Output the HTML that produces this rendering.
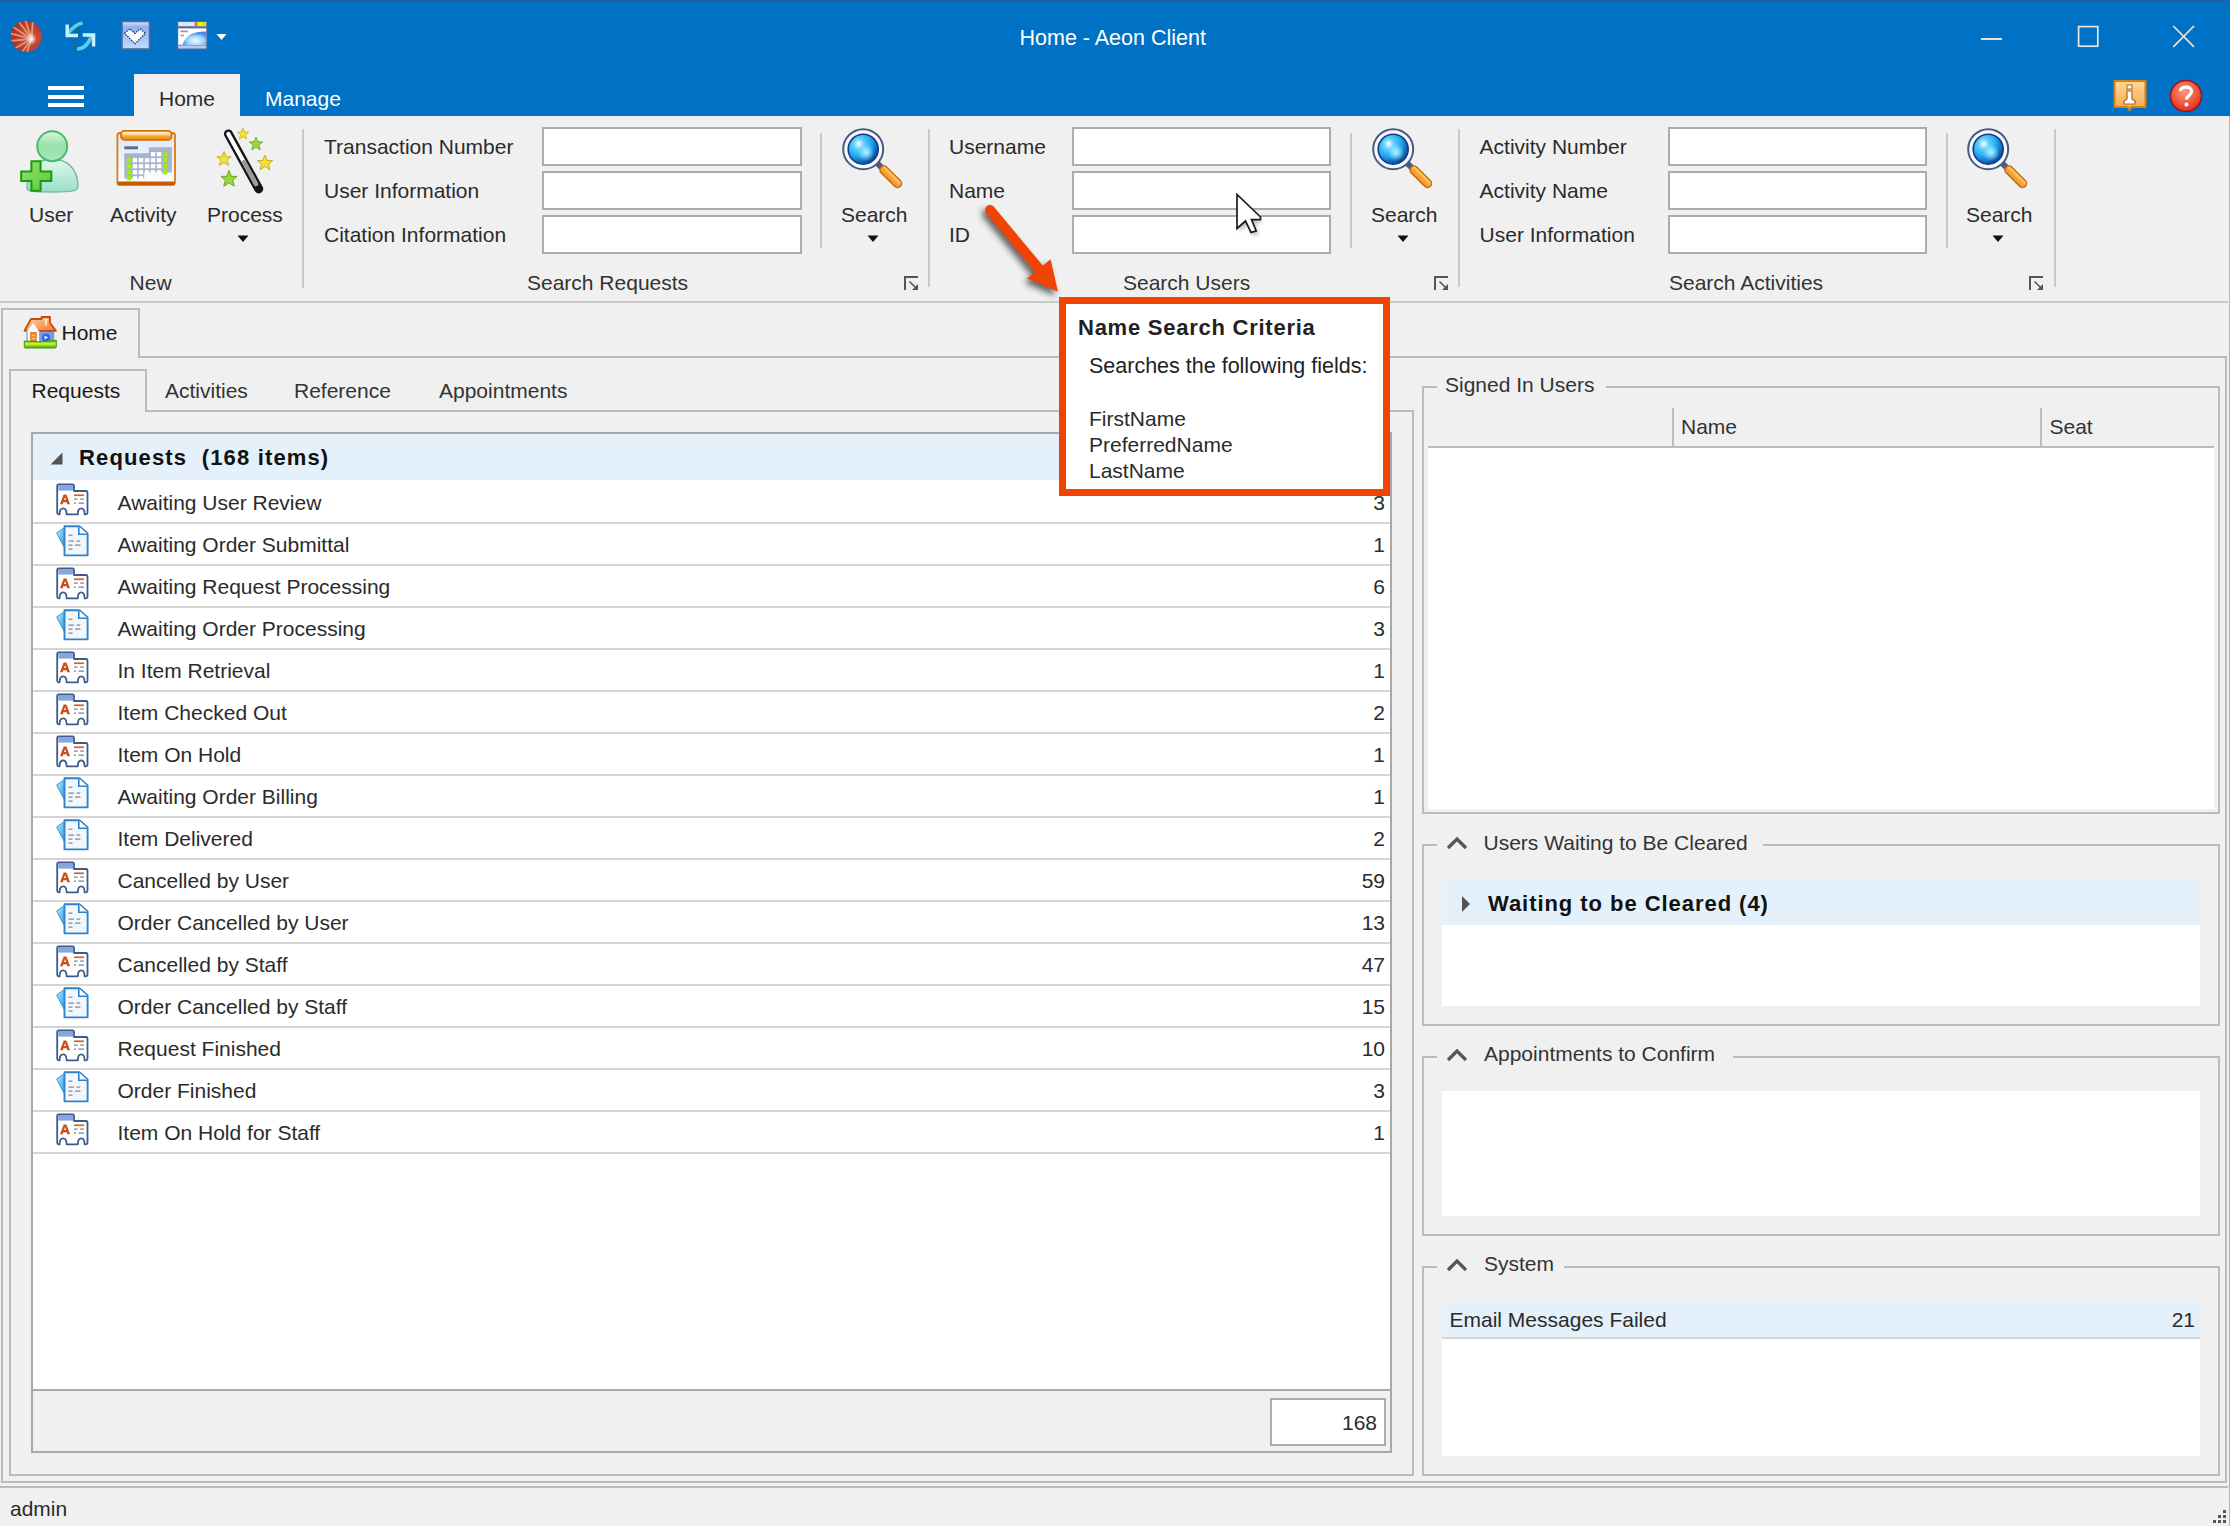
<!DOCTYPE html>
<html><head><meta charset="utf-8"><title>Home - Aeon Client</title>
<style>
html,body{margin:0;padding:0;}
body{width:2230px;height:1526px;position:relative;overflow:hidden;background:#f0f0f0;font-family:"Liberation Sans",sans-serif;}
body>div,body>svg{position:absolute;box-sizing:content-box;}
.t{white-space:nowrap;}
</style></head><body>
<div style="left:0px;top:0px;width:2230px;height:116px;background:#0072c6;"></div>
<div style="left:0px;top:0px;width:2230px;height:1px;background:#1e5e9e;"></div>
<svg style="left:9px;top:19px" width="35" height="35" viewBox="0 0 35 35"><defs><radialGradient id="rg1" cx="65%" cy="55%" r="70%"><stop offset="0" stop-color="#d05a40"/><stop offset="1" stop-color="#aa2c14"/></radialGradient>
<radialGradient id="rg1b" cx="50%" cy="50%" r="50%"><stop offset="0" stop-color="#fff" stop-opacity="1"/><stop offset="1" stop-color="#fff" stop-opacity="0"/></radialGradient>
<clipPath id="cp1"><circle cx="17.3" cy="17.3" r="15.6"/></clipPath></defs>
<circle cx="17.3" cy="17.3" r="15.6" fill="url(#rg1)"/>
<g clip-path="url(#cp1)" stroke="#f0b0a0" stroke-width="1.8" opacity=".75" stroke-linecap="round">
<line x1="22.5" y1="20" x2="1" y2="6"/><line x1="22.5" y1="20" x2="0" y2="14"/><line x1="22.5" y1="20" x2="0" y2="22"/><line x1="22.5" y1="20" x2="3" y2="31"/>
<line x1="22.5" y1="20" x2="11" y2="36"/><line x1="22.5" y1="20" x2="8" y2="0"/><line x1="22.5" y1="20" x2="16" y2="0"/><line x1="22.5" y1="20" x2="24" y2="1"/><line x1="22.5" y1="20" x2="17" y2="36"/></g>
<ellipse cx="22.5" cy="20" rx="5" ry="6" fill="url(#rg1b)"/></svg>
<svg style="left:63px;top:19px" width="35" height="33" viewBox="0 0 35 33"><g fill="none" stroke-linecap="butt">
<path d="M17.5 17 C14 14 14 6 19 4.5" stroke="#1c6a8a" stroke-width="3" opacity=".8"/>
<path d="M14 29.5 C19 31 25 26 28.5 17.5" stroke="#5ccdf0" stroke-width="3.6"/>
<path d="M14.5 18.5 C10 21 10 28 14 29.5" stroke="#1c6a8a" stroke-width="3" opacity=".8"/>
<path d="M4 15.5 C9 9 13 5 19.5 4" stroke="#5ccdf0" stroke-width="3.6"/>
<path d="M4.2 5.5 V16.5 H15" stroke="#c8f2ff" stroke-width="3.4"/>
<path d="M19.8 16 H30.6 V27.4" stroke="#c8f2ff" stroke-width="3.4"/></g></svg>
<svg style="left:120px;top:20px" width="32" height="32" viewBox="0 0 32 32"><defs><linearGradient id="bsq" x1="0" y1="0" x2="0" y2="1"><stop offset="0" stop-color="#dde8ff"/><stop offset=".2" stop-color="#8fb2f0"/><stop offset="1" stop-color="#c2dcff"/></linearGradient></defs>
<rect x="2" y="1.5" width="27.5" height="27.5" fill="url(#bsq)" stroke="#5a6890" stroke-width="1.6"/>
<path d="M4.5 13.2 L10 8.8 L15 13.5 L20 8.8 L25.5 13.2 L15 23.8 Z" fill="#fff" stroke="#2a3a80" stroke-width="1.4" stroke-dasharray="1.6 1"/></svg>
<svg style="left:176px;top:20px" width="33" height="31" viewBox="0 0 33 31"><defs><radialGradient id="glb" cx="55%" cy="70%" r="60%"><stop offset="0" stop-color="#f0fbff"/><stop offset=".55" stop-color="#a8d8ff"/><stop offset="1" stop-color="#3b8cf5"/></radialGradient></defs>
<rect x="1.2" y="1" width="30" height="28.5" fill="#5a6a9a"/>
<rect x="2.2" y="2" width="28" height="4.2" fill="#dfe8fa"/>
<rect x="18.5" y="2" width="3.2" height="4.2" fill="#f07060"/><rect x="22" y="2" width="3" height="4.2" fill="#f0f000"/><rect x="25.8" y="2" width="3.8" height="4.2" fill="#c8e800"/>
<rect x="2.2" y="8.4" width="28" height="16.3" fill="#fff"/>
<rect x="4.4" y="10.6" width="7.6" height="1.6" rx=".8" fill="#8a9ab8"/><rect x="4.4" y="14.7" width="3.8" height="1.6" rx=".8" fill="#8a9ab8"/>
<path d="M6.6 24.7 C9 16 17 11 30.2 11.5 V24.7 Z" fill="url(#glb)"/>
<rect x="2.2" y="25.4" width="28" height="3.1" fill="#b8c8f2"/></svg>
<svg style="left:216px;top:33px" width="11" height="8"><path d="M0.5 1 L10.5 1 L5.5 7 Z" fill="#fff"/></svg>
<div class="t" style="top:28.2px;font-size:21.5px;line-height:21.5px;color:#fff;left:1019.5px;">Home - Aeon Client</div>
<div style="left:1981px;top:38.2px;width:21px;height:1.7999999999999972px;background:#ece6da;"></div>
<svg style="left:2077px;top:25px" width="23" height="23" viewBox="0 0 23 23"><rect x="1.6" y="1.6" width="19.2" height="19.6" fill="none" stroke="#ece6da" stroke-width="1.7"/></svg>
<svg style="left:2172px;top:25px" width="23" height="23" viewBox="0 0 23 23"><g stroke="#ece6da" stroke-width="1.7"><line x1="1.3" y1="1" x2="22" y2="21.8"/><line x1="22" y1="1" x2="1.3" y2="21.8"/></g></svg>
<div style="left:48px;top:86px;width:36px;height:4px;background:#fff;"></div>
<div style="left:48px;top:95px;width:36px;height:4px;background:#fff;"></div>
<div style="left:48px;top:103px;width:36px;height:3.5px;background:#fff;"></div>
<div style="left:134px;top:74px;width:106px;height:42px;background:#f0f0f0;"></div>
<div class="t" style="top:88.2px;font-size:21px;line-height:21px;color:#2b2b2b;left:159.0px;">Home</div>
<div class="t" style="top:88.2px;font-size:21px;line-height:21px;color:#fff;left:265.0px;">Manage</div>
<svg style="left:2112px;top:78px" width="36" height="35" viewBox="0 0 36 35"><defs><linearGradient id="lg_i" x1="0" y1="0" x2="0" y2="1"><stop offset="0" stop-color="#ffd79a"/><stop offset="1" stop-color="#f5a84a"/></linearGradient></defs>
<path d="M2.5 3 H33.5 V29 H19.5 L17.5 32 L15.5 29 H2.5 Z" fill="url(#lg_i)" stroke="#d9800e" stroke-width="2"/>
<rect x="15" y="7" width="5" height="4" fill="#fff" stroke="#b0641a" stroke-width="1"/>
<path d="M15 13 H20 V21 L23 23 V26 H12 V23 L15 21 Z" fill="#fff" stroke="#b0641a" stroke-width="1.2"/></svg>
<svg style="left:2168px;top:78px" width="36" height="36" viewBox="0 0 36 36"><defs><radialGradient id="rg_h" cx="45%" cy="35%" r="65%"><stop offset="0" stop-color="#ff9a7a"/><stop offset="1" stop-color="#e0301c"/></radialGradient></defs>
<circle cx="18" cy="18" r="15.5" fill="url(#rg_h)" stroke="#a01010" stroke-width="1.5"/>
<path d="M12.5 13 C12.5 8 23.5 7.5 23.5 13.5 C23.5 17 18.5 17.5 18.5 21.5" fill="none" stroke="#fff" stroke-width="3.2"/>
<circle cx="18.5" cy="26.5" r="2" fill="#fff"/></svg>
<div style="left:2229px;top:116px;width:1px;height:1410px;background:#8fbde8;"></div>
<div style="left:0px;top:116px;width:2228px;height:185px;background:#f0f0f0;"></div>
<div style="left:0px;top:301px;width:2228px;height:2px;background:#c9c9c9;"></div>
<svg style="left:18px;top:126px" width="64" height="70" viewBox="0 0 64 70"><defs><linearGradient id="ug1" x1="0" y1="0" x2="0" y2="1"><stop offset="0" stop-color="#d8f7dc"/><stop offset=".5" stop-color="#95e0a8"/><stop offset="1" stop-color="#a8e8c0"/></linearGradient>
<linearGradient id="ug2" x1="0" y1="0" x2="0" y2="1"><stop offset="0" stop-color="#e2f8ea"/><stop offset="1" stop-color="#98e0c8"/></linearGradient>
<linearGradient id="ug3" x1="0" y1="0" x2="1" y2="1"><stop offset="0" stop-color="#9ae070"/><stop offset="1" stop-color="#5cc83a"/></linearGradient></defs>
<path d="M9 62 C9 44 18 33 34 33 C50 33 60 44 60 60 C60 65 55 66 34 66 C14 66 9 65 9 62 Z" fill="url(#ug2)" stroke="#78b8a0" stroke-width="1.4"/>
<circle cx="34.2" cy="20.2" r="15" fill="url(#ug1)" stroke="#4cb86a" stroke-width="2"/>
<path d="M13.4 35.3 H22.6 V45.6 H33.3 V55 H22.6 V64.7 H13.4 V55 H3.2 V45.6 H13.4 Z" fill="url(#ug3)" stroke="#1a9a0a" stroke-width="2"/></svg>
<div class="t" style="top:204.2px;font-size:21px;line-height:21px;color:#2b2b2b;left:29.0px;">User</div>
<svg style="left:114px;top:128px" width="64" height="60" viewBox="0 0 64 60"><defs><linearGradient id="cal1" x1="0" y1="0" x2="0" y2="1"><stop offset="0" stop-color="#dbe6fa"/><stop offset="1" stop-color="#fff"/></linearGradient>
<linearGradient id="cal2" x1="0" y1="0" x2="0" y2="1"><stop offset="0" stop-color="#fff"/><stop offset=".35" stop-color="#ffe0a0"/><stop offset=".6" stop-color="#f8a830"/><stop offset="1" stop-color="#e88a18"/></linearGradient></defs>
<rect x="3.4" y="5" width="57.6" height="51.5" rx="2.5" fill="url(#cal1)" stroke="#dd7a10" stroke-width="1.8"/>
<rect x="3.4" y="53.5" width="57.6" height="4" rx="1.5" fill="#c85a00"/>
<rect x="7" y="2.8" width="50.5" height="9" rx="3.5" fill="url(#cal2)" stroke="#d87008" stroke-width="1.8"/>
<rect x="10.3" y="18.3" width="13.7" height="3" fill="#5a6a90"/>
<path d="M34.8 19.2 H57.9 V44.4 H30.2 V50.4 H10.3 V25.2 H34.8 Z" fill="#a8b4cc"/>
<rect x="36.9" y="24.1" width="4.4" height="4.2" fill="#fff"/><rect x="42.9" y="24.1" width="4.4" height="4.2" fill="#fff"/><rect x="48.9" y="24.1" width="4.4" height="4.2" fill="#a0f000"/><rect x="12.8" y="30.1" width="4.4" height="4.2" fill="#a0f000"/><rect x="18.8" y="30.1" width="4.4" height="4.2" fill="#fff"/><rect x="24.8" y="30.1" width="4.4" height="4.2" fill="#fff"/><rect x="30.9" y="30.1" width="4.4" height="4.2" fill="#fff"/><rect x="36.9" y="30.1" width="4.4" height="4.2" fill="#fff"/><rect x="42.9" y="30.1" width="4.4" height="4.2" fill="#fff"/><rect x="48.9" y="30.1" width="4.4" height="4.2" fill="#a0f000"/><rect x="12.8" y="36.1" width="4.4" height="4.2" fill="#a0f000"/><rect x="18.8" y="36.1" width="4.4" height="4.2" fill="#fff"/><rect x="24.8" y="36.1" width="4.4" height="4.2" fill="#fff"/><rect x="30.9" y="36.1" width="4.4" height="4.2" fill="#fff"/><rect x="36.9" y="36.1" width="4.4" height="4.2" fill="#fff"/><rect x="42.9" y="36.1" width="4.4" height="4.2" fill="#fff"/><rect x="48.9" y="36.1" width="4.4" height="4.2" fill="#a0f000"/><rect x="12.8" y="42.2" width="4.4" height="4.2" fill="#a0f000"/><rect x="18.8" y="42.2" width="4.4" height="4.2" fill="#fff"/><rect x="24.8" y="42.2" width="4.4" height="4.2" fill="#fff"/><rect x="30.9" y="42.2" width="4.4" height="4.2" fill="#fff"/><rect x="36.9" y="42.2" width="4.4" height="4.2" fill="#fff"/><rect x="42.9" y="42.2" width="4.4" height="4.2" fill="#fff"/><rect x="48.9" y="42.2" width="4.4" height="4.2" fill="#a0f000"/><rect x="12.8" y="48.2" width="4.4" height="4.2" fill="#a0f000"/><rect x="18.8" y="48.2" width="4.4" height="4.2" fill="#fff"/><rect x="24.8" y="48.2" width="4.4" height="4.2" fill="#fff"/></svg>
<div class="t" style="top:204.2px;font-size:21px;line-height:21px;color:#2b2b2b;left:110.0px;">Activity</div>
<svg style="left:214px;top:126px" width="62" height="68" viewBox="0 0 62 68"><defs><linearGradient id="wg" x1="0" y1="0" x2="1" y2="0"><stop offset="0" stop-color="#222"/><stop offset=".5" stop-color="#fff"/><stop offset="1" stop-color="#111"/></linearGradient></defs>
<line x1="14.4" y1="7.9" x2="44.7" y2="62.9" stroke="#151515" stroke-width="9" stroke-linecap="round"/>
<line x1="14.4" y1="7.9" x2="42" y2="58" stroke="#fafafa" stroke-width="4.2" stroke-linecap="round"/>
<line x1="30" y1="36" x2="42" y2="58" stroke="#999" stroke-width="4.2" stroke-linecap="round"/>
<path transform="translate(29,8) scale(0.6)" d="M0 -10 L2.9 -3.1 L9.5 -3.1 L4.3 1.7 L6.2 8.5 L0 4.5 L-6.2 8.5 L-4.3 1.7 L-9.5 -3.1 L-2.9 -3.1 Z" fill="#f3e13a" stroke="#c0a000" stroke-width="1"/><path transform="translate(42,18) scale(0.7)" d="M0 -10 L2.9 -3.1 L9.5 -3.1 L4.3 1.7 L6.2 8.5 L0 4.5 L-6.2 8.5 L-4.3 1.7 L-9.5 -3.1 L-2.9 -3.1 Z" fill="#9ad83a" stroke="#5a9a10" stroke-width="1"/><path transform="translate(10,33) scale(0.75)" d="M0 -10 L2.9 -3.1 L9.5 -3.1 L4.3 1.7 L6.2 8.5 L0 4.5 L-6.2 8.5 L-4.3 1.7 L-9.5 -3.1 L-2.9 -3.1 Z" fill="#f3e13a" stroke="#c0a000" stroke-width="1"/><path transform="translate(51,37) scale(0.8)" d="M0 -10 L2.9 -3.1 L9.5 -3.1 L4.3 1.7 L6.2 8.5 L0 4.5 L-6.2 8.5 L-4.3 1.7 L-9.5 -3.1 L-2.9 -3.1 Z" fill="#f3e13a" stroke="#c0a000" stroke-width="1"/><path transform="translate(15,53) scale(0.85)" d="M0 -10 L2.9 -3.1 L9.5 -3.1 L4.3 1.7 L6.2 8.5 L0 4.5 L-6.2 8.5 L-4.3 1.7 L-9.5 -3.1 L-2.9 -3.1 Z" fill="#9ad83a" stroke="#5a9a10" stroke-width="1"/></svg>
<div class="t" style="top:204.2px;font-size:21px;line-height:21px;color:#2b2b2b;left:207.0px;">Process</div>
<svg style="left:237px;top:235px" width="12" height="8"><path d="M0.5 0.5 L11.5 0.5 L6 7 Z" fill="#111"/></svg>
<div class="t" style="top:272.1px;font-size:21px;line-height:21px;color:#333;left:129.6px;">New</div>
<div style="left:302px;top:129px;width:2px;height:159px;background:#c8c8c8;"></div>
<div class="t" style="top:136.2px;font-size:21px;line-height:21px;color:#2b2b2b;left:324.0px;">Transaction Number</div>
<div class="t" style="top:180.2px;font-size:21px;line-height:21px;color:#2b2b2b;left:324.0px;">User Information</div>
<div class="t" style="top:224.2px;font-size:21px;line-height:21px;color:#2b2b2b;left:324.0px;">Citation Information</div>
<div style="left:542px;top:126.5px;width:256px;height:35.5px;border:2px solid #acacac;background:#fff"></div>
<div style="left:542px;top:170.5px;width:256px;height:35.5px;border:2px solid #acacac;background:#fff"></div>
<div style="left:542px;top:214.5px;width:256px;height:35.5px;border:2px solid #acacac;background:#fff"></div>
<div style="left:820px;top:133px;width:2px;height:115px;background:#c8c8c8;"></div>
<svg style="left:841px;top:127px" width="64" height="64" viewBox="0 0 64 64"><defs><radialGradient id="mg841" cx="35%" cy="32%" r="70%"><stop offset="0" stop-color="#ffffff"/><stop offset=".25" stop-color="#5fd0ff"/><stop offset=".6" stop-color="#20a8f0"/><stop offset="1" stop-color="#0a4aa0"/></radialGradient>
<radialGradient id="mgb841" cx="60%" cy="62%" r="30%"><stop offset="0" stop-color="#c0fbff" stop-opacity=".9"/><stop offset="1" stop-color="#c0fbff" stop-opacity="0"/></radialGradient>
<linearGradient id="mh841" x1="0" y1="1" x2="1" y2="0"><stop offset="0" stop-color="#e07010"/><stop offset=".5" stop-color="#f8a838"/><stop offset=".8" stop-color="#fff5b0"/><stop offset="1" stop-color="#d88020"/></linearGradient></defs>
<line x1="34.5" y1="34.5" x2="42" y2="42" stroke="#4a5a80" stroke-width="6"/>
<line x1="43" y1="43" x2="56.5" y2="56.5" stroke="#c86a10" stroke-width="9.5" stroke-linecap="round"/>
<line x1="43" y1="43" x2="56.5" y2="56.5" stroke="url(#mh841)" stroke-width="6.5" stroke-linecap="round"/>
<circle cx="22.2" cy="22.2" r="20" fill="#f4f8ff" stroke="#4a5a80" stroke-width="2"/>
<circle cx="22.2" cy="22.2" r="15" fill="url(#mg841)" stroke="#1a3a80" stroke-width="1.6"/>
<circle cx="22.2" cy="22.2" r="14" fill="url(#mgb841)"/></svg>
<div class="t" style="top:204.2px;font-size:21px;line-height:21px;color:#2b2b2b;left:841.0px;">Search</div>
<svg style="left:867px;top:235px" width="12" height="8"><path d="M0.5 0.5 L11.5 0.5 L6 7 Z" fill="#111"/></svg>
<div class="t" style="top:272.1px;font-size:21px;line-height:21px;color:#333;left:527.0px;">Search Requests</div>
<svg style="left:904px;top:276px" width="15" height="15" viewBox="0 0 15 15"><path d="M1 14 V1 H14" fill="none" stroke="#555" stroke-width="2"/><path d="M5.5 5.5 L11.5 11.5" stroke="#555" stroke-width="1.6"/><path d="M14 8 V14 H8 Z" fill="#555"/></svg>
<div style="left:928px;top:129px;width:2px;height:158px;background:#c8c8c8;"></div>
<div class="t" style="top:136.2px;font-size:21px;line-height:21px;color:#2b2b2b;left:949.0px;">Username</div>
<div class="t" style="top:180.2px;font-size:21px;line-height:21px;color:#2b2b2b;left:949.0px;">Name</div>
<div class="t" style="top:224.2px;font-size:21px;line-height:21px;color:#2b2b2b;left:949.0px;">ID</div>
<div style="left:1072px;top:126.5px;width:255px;height:35.5px;border:2px solid #acacac;background:#fff"></div>
<div style="left:1072px;top:170.5px;width:255px;height:35.5px;border:2px solid #acacac;background:#fff"></div>
<div style="left:1072px;top:214.5px;width:255px;height:35.5px;border:2px solid #acacac;background:#fff"></div>
<div style="left:1350px;top:133px;width:2px;height:115px;background:#c8c8c8;"></div>
<svg style="left:1371px;top:127px" width="64" height="64" viewBox="0 0 64 64"><defs><radialGradient id="mg1371" cx="35%" cy="32%" r="70%"><stop offset="0" stop-color="#ffffff"/><stop offset=".25" stop-color="#5fd0ff"/><stop offset=".6" stop-color="#20a8f0"/><stop offset="1" stop-color="#0a4aa0"/></radialGradient>
<radialGradient id="mgb1371" cx="60%" cy="62%" r="30%"><stop offset="0" stop-color="#c0fbff" stop-opacity=".9"/><stop offset="1" stop-color="#c0fbff" stop-opacity="0"/></radialGradient>
<linearGradient id="mh1371" x1="0" y1="1" x2="1" y2="0"><stop offset="0" stop-color="#e07010"/><stop offset=".5" stop-color="#f8a838"/><stop offset=".8" stop-color="#fff5b0"/><stop offset="1" stop-color="#d88020"/></linearGradient></defs>
<line x1="34.5" y1="34.5" x2="42" y2="42" stroke="#4a5a80" stroke-width="6"/>
<line x1="43" y1="43" x2="56.5" y2="56.5" stroke="#c86a10" stroke-width="9.5" stroke-linecap="round"/>
<line x1="43" y1="43" x2="56.5" y2="56.5" stroke="url(#mh1371)" stroke-width="6.5" stroke-linecap="round"/>
<circle cx="22.2" cy="22.2" r="20" fill="#f4f8ff" stroke="#4a5a80" stroke-width="2"/>
<circle cx="22.2" cy="22.2" r="15" fill="url(#mg1371)" stroke="#1a3a80" stroke-width="1.6"/>
<circle cx="22.2" cy="22.2" r="14" fill="url(#mgb1371)"/></svg>
<div class="t" style="top:204.2px;font-size:21px;line-height:21px;color:#2b2b2b;left:1371.0px;">Search</div>
<svg style="left:1397px;top:235px" width="12" height="8"><path d="M0.5 0.5 L11.5 0.5 L6 7 Z" fill="#111"/></svg>
<div class="t" style="top:272.1px;font-size:21px;line-height:21px;color:#333;left:1123.0px;">Search Users</div>
<svg style="left:1434px;top:276px" width="15" height="15" viewBox="0 0 15 15"><path d="M1 14 V1 H14" fill="none" stroke="#555" stroke-width="2"/><path d="M5.5 5.5 L11.5 11.5" stroke="#555" stroke-width="1.6"/><path d="M14 8 V14 H8 Z" fill="#555"/></svg>
<div style="left:1458px;top:129px;width:2px;height:158px;background:#c8c8c8;"></div>
<div class="t" style="top:136.2px;font-size:21px;line-height:21px;color:#2b2b2b;left:1479.6px;">Activity Number</div>
<div class="t" style="top:180.2px;font-size:21px;line-height:21px;color:#2b2b2b;left:1479.6px;">Activity Name</div>
<div class="t" style="top:224.2px;font-size:21px;line-height:21px;color:#2b2b2b;left:1479.6px;">User Information</div>
<div style="left:1668px;top:126.5px;width:255px;height:35.5px;border:2px solid #acacac;background:#fff"></div>
<div style="left:1668px;top:170.5px;width:255px;height:35.5px;border:2px solid #acacac;background:#fff"></div>
<div style="left:1668px;top:214.5px;width:255px;height:35.5px;border:2px solid #acacac;background:#fff"></div>
<div style="left:1946px;top:133px;width:2px;height:115px;background:#c8c8c8;"></div>
<svg style="left:1966px;top:127px" width="64" height="64" viewBox="0 0 64 64"><defs><radialGradient id="mg1966" cx="35%" cy="32%" r="70%"><stop offset="0" stop-color="#ffffff"/><stop offset=".25" stop-color="#5fd0ff"/><stop offset=".6" stop-color="#20a8f0"/><stop offset="1" stop-color="#0a4aa0"/></radialGradient>
<radialGradient id="mgb1966" cx="60%" cy="62%" r="30%"><stop offset="0" stop-color="#c0fbff" stop-opacity=".9"/><stop offset="1" stop-color="#c0fbff" stop-opacity="0"/></radialGradient>
<linearGradient id="mh1966" x1="0" y1="1" x2="1" y2="0"><stop offset="0" stop-color="#e07010"/><stop offset=".5" stop-color="#f8a838"/><stop offset=".8" stop-color="#fff5b0"/><stop offset="1" stop-color="#d88020"/></linearGradient></defs>
<line x1="34.5" y1="34.5" x2="42" y2="42" stroke="#4a5a80" stroke-width="6"/>
<line x1="43" y1="43" x2="56.5" y2="56.5" stroke="#c86a10" stroke-width="9.5" stroke-linecap="round"/>
<line x1="43" y1="43" x2="56.5" y2="56.5" stroke="url(#mh1966)" stroke-width="6.5" stroke-linecap="round"/>
<circle cx="22.2" cy="22.2" r="20" fill="#f4f8ff" stroke="#4a5a80" stroke-width="2"/>
<circle cx="22.2" cy="22.2" r="15" fill="url(#mg1966)" stroke="#1a3a80" stroke-width="1.6"/>
<circle cx="22.2" cy="22.2" r="14" fill="url(#mgb1966)"/></svg>
<div class="t" style="top:204.2px;font-size:21px;line-height:21px;color:#2b2b2b;left:1966.0px;">Search</div>
<svg style="left:1992px;top:235px" width="12" height="8"><path d="M0.5 0.5 L11.5 0.5 L6 7 Z" fill="#111"/></svg>
<div class="t" style="top:272.1px;font-size:21px;line-height:21px;color:#333;left:1669.0px;">Search Activities</div>
<svg style="left:2029px;top:276px" width="15" height="15" viewBox="0 0 15 15"><path d="M1 14 V1 H14" fill="none" stroke="#555" stroke-width="2"/><path d="M5.5 5.5 L11.5 11.5" stroke="#555" stroke-width="1.6"/><path d="M14 8 V14 H8 Z" fill="#555"/></svg>
<div style="left:2054px;top:129px;width:2px;height:158px;background:#c8c8c8;"></div>
<div style="left:1px;top:356px;width:2px;height:1127px;background:#bcbcbc;"></div>
<div style="left:2225px;top:356px;width:2px;height:1127px;background:#bcbcbc;"></div>
<div style="left:1px;top:1481px;width:2226px;height:2px;background:#bcbcbc;"></div>
<div style="left:140px;top:356px;width:2087px;height:2px;background:#bcbcbc;"></div>
<div style="left:1px;top:308px;width:139px;height:2px;background:#bcbcbc;"></div>
<div style="left:1px;top:308px;width:2px;height:50px;background:#bcbcbc;"></div>
<div style="left:138px;top:308px;width:2px;height:50px;background:#bcbcbc;"></div>
<svg style="left:23px;top:314px" width="36" height="36" viewBox="0 0 36 36"><defs><linearGradient id="grs" x1="0" y1="0" x2="0" y2="1"><stop offset="0" stop-color="#3c9a18"/><stop offset=".45" stop-color="#d8f828"/><stop offset="1" stop-color="#48a020"/></linearGradient>
<linearGradient id="rf" x1="0" y1="0" x2="1" y2="1"><stop offset="0" stop-color="#ffd8a8"/><stop offset="1" stop-color="#f07830"/></linearGradient></defs>
<rect x="3.3" y="17" width="13" height="11.5" fill="#f0fbff"/>
<rect x="3.3" y="17" width="1.6" height="11.5" fill="#9ab0e0"/>
<rect x="16.2" y="17" width="15" height="11.5" fill="#7a9ad8"/>
<rect x="7.4" y="18.1" width="5.9" height="10" fill="#f08a28" stroke="#e07010" stroke-width=".6"/>
<rect x="9" y="21" width="3" height="1" fill="#ffd8a0"/><rect x="9" y="24" width="3" height="1" fill="#ffd8a0"/>
<circle cx="23" cy="23.8" r="4" fill="#2868e8"/><path d="M21.5 21.8 L25.3 23.4 L21.5 25.2 Z" fill="#e8f4ff"/>
<path d="M1.5 16.8 L8 5 H18.5 V3 H27 V9 L33 16.8 Z" fill="url(#rf)" stroke="#c84a0a" stroke-width="1.8" stroke-linejoin="round"/>
<path d="M3.5 18 L10.3 9 L16.5 18 Z" fill="#f0fbff"/>
<path d="M21 5 H25 L23.8 7 V11.5 H22.2 V7 Z" fill="#fff4e0"/>
<path d="M1.3 27 Q17 29 33.3 26.2 V32.8 Q33.3 34 32 34 H2.5 Q1.3 34 1.3 32.8 Z" fill="url(#grs)" stroke="#3a9a10" stroke-width="1"/></svg>
<div class="t" style="top:322.1px;font-size:21px;line-height:21px;color:#1a1a1a;left:61.5px;">Home</div>
<div style="left:8.5px;top:368.5px;width:138.0px;height:2.0px;background:#bcbcbc;"></div>
<div style="left:8.5px;top:368.5px;width:2.0px;height:1107.0px;background:#bcbcbc;"></div>
<div style="left:144.5px;top:368.5px;width:2.0px;height:43.5px;background:#bcbcbc;"></div>
<div style="left:146px;top:410px;width:1268px;height:2px;background:#bcbcbc;"></div>
<div style="left:1412px;top:410px;width:2px;height:1065.5px;background:#bcbcbc;"></div>
<div style="left:8.5px;top:1473.5px;width:1405.5px;height:2.0px;background:#bcbcbc;"></div>
<div class="t" style="top:379.6px;font-size:21px;line-height:21px;color:#1a1a1a;left:31.5px;">Requests</div>
<div class="t" style="top:379.6px;font-size:21px;line-height:21px;color:#333;left:165.0px;">Activities</div>
<div class="t" style="top:379.6px;font-size:21px;line-height:21px;color:#333;left:294.0px;">Reference</div>
<div class="t" style="top:379.6px;font-size:21px;line-height:21px;color:#333;left:439.0px;">Appointments</div>
<div style="left:30.5px;top:432px;width:1357.5px;height:1017px;border:2px solid #a9a9a9;background:#fff"></div>
<div style="left:32.5px;top:434px;width:1357.5px;height:46px;background:#e4f0fa;"></div>
<svg style="left:50px;top:452px" width="13" height="13" viewBox="0 0 13 13"><path d="M12.5 0.5 V12.5 H0.5 Z" fill="#555"/></svg>
<div class="t" style="top:447.3px;font-size:22px;line-height:22px;color:#111;font-weight:700;letter-spacing:1.15px;left:79.0px;">Requests&nbsp; (168 items)</div>
<div style="left:32.5px;top:522px;width:1357.5px;height:2px;background:#d5d5d5;"></div>
<svg style="left:56px;top:483px" width="33" height="33" viewBox="0 0 33 33"><path d="M1.2 8 V29.8 Q1.2 31.3 2.7 31.3 H3.6 Q3.6 25.3 7.1 25.3 Q10.6 25.3 10.6 31.3 H21.8 Q21.8 25.3 25.2 25.3 Q28.6 25.3 28.6 31.3 H30 Q31.5 31.3 31.5 29.8 V9.5 Q31.5 8 30 8 H18 V3 Q18 1.5 16.5 1.5 H2.7 Q1.2 1.5 1.2 3 Z" fill="#fff" stroke="#3d5a8a" stroke-width="1.8" stroke-linejoin="round"/>
<rect x="2.3" y="2.6" width="14.8" height="5" fill="#86a6e0"/>
<path d="M4 21.2 L7.7 11.6 H10.4 L14 21.2 H11.3 L10.6 19.2 H7.4 L6.7 21.2 Z M8 17 H10 L9 14 Z" fill="#c8501a" fill-rule="evenodd"/>
<rect x="18" y="11.4" width="10" height="1.7" fill="#e0601e"/>
<g fill="#8a9ab0"><rect x="18" y="15.4" width="3.7" height="1.5"/><rect x="24.2" y="15.4" width="3.7" height="1.5"/><rect x="18" y="19.4" width="2" height="1.5"/><rect x="22.5" y="19.4" width="5.5" height="1.5"/></g></svg>
<div class="t" style="top:492.1px;font-size:21px;line-height:21px;color:#2b2b2b;left:117.5px;">Awaiting User Review</div>
<div class="t" style="top:492.1px;font-size:21px;line-height:21px;color:#2b2b2b;right:845.0px;text-align:right;">3</div>
<div style="left:32.5px;top:564px;width:1357.5px;height:2px;background:#d5d5d5;"></div>
<svg style="left:56px;top:525px" width="33" height="33" viewBox="0 0 33 33"><defs><linearGradient id="dsh" x1="0" y1="0" x2="1" y2="1"><stop offset="0" stop-color="#b8f0ff"/><stop offset="1" stop-color="#2898e0"/></linearGradient></defs>
<path d="M0.6 8 L8.5 2.5 V23 Z" fill="url(#dsh)" stroke="#3a9ad8" stroke-width="1"/>
<path d="M8.5 1.2 H23.5 L31.6 8.5 V30.4 H8.5 Z" fill="#f2f7fc" stroke="#2f82cc" stroke-width="1.9" stroke-linejoin="round"/>
<path d="M22.8 1.2 V9.2 H31.6" fill="#fff" stroke="#2f82cc" stroke-width="1.6"/>
<g fill="#98a4b4"><rect x="12.5" y="9.4" width="4" height="1.6"/><rect x="12.5" y="15.3" width="5.5" height="1.6"/><rect x="20.5" y="15.3" width="3.7" height="1.6"/><rect x="12.5" y="19.3" width="4" height="1.6"/><rect x="19" y="19.3" width="5.5" height="1.6"/><rect x="12.5" y="23.3" width="4" height="1.6"/></g></svg>
<div class="t" style="top:534.1px;font-size:21px;line-height:21px;color:#2b2b2b;left:117.5px;">Awaiting Order Submittal</div>
<div class="t" style="top:534.1px;font-size:21px;line-height:21px;color:#2b2b2b;right:845.0px;text-align:right;">1</div>
<div style="left:32.5px;top:606px;width:1357.5px;height:2px;background:#d5d5d5;"></div>
<svg style="left:56px;top:567px" width="33" height="33" viewBox="0 0 33 33"><path d="M1.2 8 V29.8 Q1.2 31.3 2.7 31.3 H3.6 Q3.6 25.3 7.1 25.3 Q10.6 25.3 10.6 31.3 H21.8 Q21.8 25.3 25.2 25.3 Q28.6 25.3 28.6 31.3 H30 Q31.5 31.3 31.5 29.8 V9.5 Q31.5 8 30 8 H18 V3 Q18 1.5 16.5 1.5 H2.7 Q1.2 1.5 1.2 3 Z" fill="#fff" stroke="#3d5a8a" stroke-width="1.8" stroke-linejoin="round"/>
<rect x="2.3" y="2.6" width="14.8" height="5" fill="#86a6e0"/>
<path d="M4 21.2 L7.7 11.6 H10.4 L14 21.2 H11.3 L10.6 19.2 H7.4 L6.7 21.2 Z M8 17 H10 L9 14 Z" fill="#c8501a" fill-rule="evenodd"/>
<rect x="18" y="11.4" width="10" height="1.7" fill="#e0601e"/>
<g fill="#8a9ab0"><rect x="18" y="15.4" width="3.7" height="1.5"/><rect x="24.2" y="15.4" width="3.7" height="1.5"/><rect x="18" y="19.4" width="2" height="1.5"/><rect x="22.5" y="19.4" width="5.5" height="1.5"/></g></svg>
<div class="t" style="top:576.1px;font-size:21px;line-height:21px;color:#2b2b2b;left:117.5px;">Awaiting Request Processing</div>
<div class="t" style="top:576.1px;font-size:21px;line-height:21px;color:#2b2b2b;right:845.0px;text-align:right;">6</div>
<div style="left:32.5px;top:648px;width:1357.5px;height:2px;background:#d5d5d5;"></div>
<svg style="left:56px;top:609px" width="33" height="33" viewBox="0 0 33 33"><defs><linearGradient id="dsh" x1="0" y1="0" x2="1" y2="1"><stop offset="0" stop-color="#b8f0ff"/><stop offset="1" stop-color="#2898e0"/></linearGradient></defs>
<path d="M0.6 8 L8.5 2.5 V23 Z" fill="url(#dsh)" stroke="#3a9ad8" stroke-width="1"/>
<path d="M8.5 1.2 H23.5 L31.6 8.5 V30.4 H8.5 Z" fill="#f2f7fc" stroke="#2f82cc" stroke-width="1.9" stroke-linejoin="round"/>
<path d="M22.8 1.2 V9.2 H31.6" fill="#fff" stroke="#2f82cc" stroke-width="1.6"/>
<g fill="#98a4b4"><rect x="12.5" y="9.4" width="4" height="1.6"/><rect x="12.5" y="15.3" width="5.5" height="1.6"/><rect x="20.5" y="15.3" width="3.7" height="1.6"/><rect x="12.5" y="19.3" width="4" height="1.6"/><rect x="19" y="19.3" width="5.5" height="1.6"/><rect x="12.5" y="23.3" width="4" height="1.6"/></g></svg>
<div class="t" style="top:618.1px;font-size:21px;line-height:21px;color:#2b2b2b;left:117.5px;">Awaiting Order Processing</div>
<div class="t" style="top:618.1px;font-size:21px;line-height:21px;color:#2b2b2b;right:845.0px;text-align:right;">3</div>
<div style="left:32.5px;top:690px;width:1357.5px;height:2px;background:#d5d5d5;"></div>
<svg style="left:56px;top:651px" width="33" height="33" viewBox="0 0 33 33"><path d="M1.2 8 V29.8 Q1.2 31.3 2.7 31.3 H3.6 Q3.6 25.3 7.1 25.3 Q10.6 25.3 10.6 31.3 H21.8 Q21.8 25.3 25.2 25.3 Q28.6 25.3 28.6 31.3 H30 Q31.5 31.3 31.5 29.8 V9.5 Q31.5 8 30 8 H18 V3 Q18 1.5 16.5 1.5 H2.7 Q1.2 1.5 1.2 3 Z" fill="#fff" stroke="#3d5a8a" stroke-width="1.8" stroke-linejoin="round"/>
<rect x="2.3" y="2.6" width="14.8" height="5" fill="#86a6e0"/>
<path d="M4 21.2 L7.7 11.6 H10.4 L14 21.2 H11.3 L10.6 19.2 H7.4 L6.7 21.2 Z M8 17 H10 L9 14 Z" fill="#c8501a" fill-rule="evenodd"/>
<rect x="18" y="11.4" width="10" height="1.7" fill="#e0601e"/>
<g fill="#8a9ab0"><rect x="18" y="15.4" width="3.7" height="1.5"/><rect x="24.2" y="15.4" width="3.7" height="1.5"/><rect x="18" y="19.4" width="2" height="1.5"/><rect x="22.5" y="19.4" width="5.5" height="1.5"/></g></svg>
<div class="t" style="top:660.1px;font-size:21px;line-height:21px;color:#2b2b2b;left:117.5px;">In Item Retrieval</div>
<div class="t" style="top:660.1px;font-size:21px;line-height:21px;color:#2b2b2b;right:845.0px;text-align:right;">1</div>
<div style="left:32.5px;top:732px;width:1357.5px;height:2px;background:#d5d5d5;"></div>
<svg style="left:56px;top:693px" width="33" height="33" viewBox="0 0 33 33"><path d="M1.2 8 V29.8 Q1.2 31.3 2.7 31.3 H3.6 Q3.6 25.3 7.1 25.3 Q10.6 25.3 10.6 31.3 H21.8 Q21.8 25.3 25.2 25.3 Q28.6 25.3 28.6 31.3 H30 Q31.5 31.3 31.5 29.8 V9.5 Q31.5 8 30 8 H18 V3 Q18 1.5 16.5 1.5 H2.7 Q1.2 1.5 1.2 3 Z" fill="#fff" stroke="#3d5a8a" stroke-width="1.8" stroke-linejoin="round"/>
<rect x="2.3" y="2.6" width="14.8" height="5" fill="#86a6e0"/>
<path d="M4 21.2 L7.7 11.6 H10.4 L14 21.2 H11.3 L10.6 19.2 H7.4 L6.7 21.2 Z M8 17 H10 L9 14 Z" fill="#c8501a" fill-rule="evenodd"/>
<rect x="18" y="11.4" width="10" height="1.7" fill="#e0601e"/>
<g fill="#8a9ab0"><rect x="18" y="15.4" width="3.7" height="1.5"/><rect x="24.2" y="15.4" width="3.7" height="1.5"/><rect x="18" y="19.4" width="2" height="1.5"/><rect x="22.5" y="19.4" width="5.5" height="1.5"/></g></svg>
<div class="t" style="top:702.1px;font-size:21px;line-height:21px;color:#2b2b2b;left:117.5px;">Item Checked Out</div>
<div class="t" style="top:702.1px;font-size:21px;line-height:21px;color:#2b2b2b;right:845.0px;text-align:right;">2</div>
<div style="left:32.5px;top:774px;width:1357.5px;height:2px;background:#d5d5d5;"></div>
<svg style="left:56px;top:735px" width="33" height="33" viewBox="0 0 33 33"><path d="M1.2 8 V29.8 Q1.2 31.3 2.7 31.3 H3.6 Q3.6 25.3 7.1 25.3 Q10.6 25.3 10.6 31.3 H21.8 Q21.8 25.3 25.2 25.3 Q28.6 25.3 28.6 31.3 H30 Q31.5 31.3 31.5 29.8 V9.5 Q31.5 8 30 8 H18 V3 Q18 1.5 16.5 1.5 H2.7 Q1.2 1.5 1.2 3 Z" fill="#fff" stroke="#3d5a8a" stroke-width="1.8" stroke-linejoin="round"/>
<rect x="2.3" y="2.6" width="14.8" height="5" fill="#86a6e0"/>
<path d="M4 21.2 L7.7 11.6 H10.4 L14 21.2 H11.3 L10.6 19.2 H7.4 L6.7 21.2 Z M8 17 H10 L9 14 Z" fill="#c8501a" fill-rule="evenodd"/>
<rect x="18" y="11.4" width="10" height="1.7" fill="#e0601e"/>
<g fill="#8a9ab0"><rect x="18" y="15.4" width="3.7" height="1.5"/><rect x="24.2" y="15.4" width="3.7" height="1.5"/><rect x="18" y="19.4" width="2" height="1.5"/><rect x="22.5" y="19.4" width="5.5" height="1.5"/></g></svg>
<div class="t" style="top:744.1px;font-size:21px;line-height:21px;color:#2b2b2b;left:117.5px;">Item On Hold</div>
<div class="t" style="top:744.1px;font-size:21px;line-height:21px;color:#2b2b2b;right:845.0px;text-align:right;">1</div>
<div style="left:32.5px;top:816px;width:1357.5px;height:2px;background:#d5d5d5;"></div>
<svg style="left:56px;top:777px" width="33" height="33" viewBox="0 0 33 33"><defs><linearGradient id="dsh" x1="0" y1="0" x2="1" y2="1"><stop offset="0" stop-color="#b8f0ff"/><stop offset="1" stop-color="#2898e0"/></linearGradient></defs>
<path d="M0.6 8 L8.5 2.5 V23 Z" fill="url(#dsh)" stroke="#3a9ad8" stroke-width="1"/>
<path d="M8.5 1.2 H23.5 L31.6 8.5 V30.4 H8.5 Z" fill="#f2f7fc" stroke="#2f82cc" stroke-width="1.9" stroke-linejoin="round"/>
<path d="M22.8 1.2 V9.2 H31.6" fill="#fff" stroke="#2f82cc" stroke-width="1.6"/>
<g fill="#98a4b4"><rect x="12.5" y="9.4" width="4" height="1.6"/><rect x="12.5" y="15.3" width="5.5" height="1.6"/><rect x="20.5" y="15.3" width="3.7" height="1.6"/><rect x="12.5" y="19.3" width="4" height="1.6"/><rect x="19" y="19.3" width="5.5" height="1.6"/><rect x="12.5" y="23.3" width="4" height="1.6"/></g></svg>
<div class="t" style="top:786.1px;font-size:21px;line-height:21px;color:#2b2b2b;left:117.5px;">Awaiting Order Billing</div>
<div class="t" style="top:786.1px;font-size:21px;line-height:21px;color:#2b2b2b;right:845.0px;text-align:right;">1</div>
<div style="left:32.5px;top:858px;width:1357.5px;height:2px;background:#d5d5d5;"></div>
<svg style="left:56px;top:819px" width="33" height="33" viewBox="0 0 33 33"><defs><linearGradient id="dsh" x1="0" y1="0" x2="1" y2="1"><stop offset="0" stop-color="#b8f0ff"/><stop offset="1" stop-color="#2898e0"/></linearGradient></defs>
<path d="M0.6 8 L8.5 2.5 V23 Z" fill="url(#dsh)" stroke="#3a9ad8" stroke-width="1"/>
<path d="M8.5 1.2 H23.5 L31.6 8.5 V30.4 H8.5 Z" fill="#f2f7fc" stroke="#2f82cc" stroke-width="1.9" stroke-linejoin="round"/>
<path d="M22.8 1.2 V9.2 H31.6" fill="#fff" stroke="#2f82cc" stroke-width="1.6"/>
<g fill="#98a4b4"><rect x="12.5" y="9.4" width="4" height="1.6"/><rect x="12.5" y="15.3" width="5.5" height="1.6"/><rect x="20.5" y="15.3" width="3.7" height="1.6"/><rect x="12.5" y="19.3" width="4" height="1.6"/><rect x="19" y="19.3" width="5.5" height="1.6"/><rect x="12.5" y="23.3" width="4" height="1.6"/></g></svg>
<div class="t" style="top:828.1px;font-size:21px;line-height:21px;color:#2b2b2b;left:117.5px;">Item Delivered</div>
<div class="t" style="top:828.1px;font-size:21px;line-height:21px;color:#2b2b2b;right:845.0px;text-align:right;">2</div>
<div style="left:32.5px;top:900px;width:1357.5px;height:2px;background:#d5d5d5;"></div>
<svg style="left:56px;top:861px" width="33" height="33" viewBox="0 0 33 33"><path d="M1.2 8 V29.8 Q1.2 31.3 2.7 31.3 H3.6 Q3.6 25.3 7.1 25.3 Q10.6 25.3 10.6 31.3 H21.8 Q21.8 25.3 25.2 25.3 Q28.6 25.3 28.6 31.3 H30 Q31.5 31.3 31.5 29.8 V9.5 Q31.5 8 30 8 H18 V3 Q18 1.5 16.5 1.5 H2.7 Q1.2 1.5 1.2 3 Z" fill="#fff" stroke="#3d5a8a" stroke-width="1.8" stroke-linejoin="round"/>
<rect x="2.3" y="2.6" width="14.8" height="5" fill="#86a6e0"/>
<path d="M4 21.2 L7.7 11.6 H10.4 L14 21.2 H11.3 L10.6 19.2 H7.4 L6.7 21.2 Z M8 17 H10 L9 14 Z" fill="#c8501a" fill-rule="evenodd"/>
<rect x="18" y="11.4" width="10" height="1.7" fill="#e0601e"/>
<g fill="#8a9ab0"><rect x="18" y="15.4" width="3.7" height="1.5"/><rect x="24.2" y="15.4" width="3.7" height="1.5"/><rect x="18" y="19.4" width="2" height="1.5"/><rect x="22.5" y="19.4" width="5.5" height="1.5"/></g></svg>
<div class="t" style="top:870.1px;font-size:21px;line-height:21px;color:#2b2b2b;left:117.5px;">Cancelled by User</div>
<div class="t" style="top:870.1px;font-size:21px;line-height:21px;color:#2b2b2b;right:845.0px;text-align:right;">59</div>
<div style="left:32.5px;top:942px;width:1357.5px;height:2px;background:#d5d5d5;"></div>
<svg style="left:56px;top:903px" width="33" height="33" viewBox="0 0 33 33"><defs><linearGradient id="dsh" x1="0" y1="0" x2="1" y2="1"><stop offset="0" stop-color="#b8f0ff"/><stop offset="1" stop-color="#2898e0"/></linearGradient></defs>
<path d="M0.6 8 L8.5 2.5 V23 Z" fill="url(#dsh)" stroke="#3a9ad8" stroke-width="1"/>
<path d="M8.5 1.2 H23.5 L31.6 8.5 V30.4 H8.5 Z" fill="#f2f7fc" stroke="#2f82cc" stroke-width="1.9" stroke-linejoin="round"/>
<path d="M22.8 1.2 V9.2 H31.6" fill="#fff" stroke="#2f82cc" stroke-width="1.6"/>
<g fill="#98a4b4"><rect x="12.5" y="9.4" width="4" height="1.6"/><rect x="12.5" y="15.3" width="5.5" height="1.6"/><rect x="20.5" y="15.3" width="3.7" height="1.6"/><rect x="12.5" y="19.3" width="4" height="1.6"/><rect x="19" y="19.3" width="5.5" height="1.6"/><rect x="12.5" y="23.3" width="4" height="1.6"/></g></svg>
<div class="t" style="top:912.1px;font-size:21px;line-height:21px;color:#2b2b2b;left:117.5px;">Order Cancelled by User</div>
<div class="t" style="top:912.1px;font-size:21px;line-height:21px;color:#2b2b2b;right:845.0px;text-align:right;">13</div>
<div style="left:32.5px;top:984px;width:1357.5px;height:2px;background:#d5d5d5;"></div>
<svg style="left:56px;top:945px" width="33" height="33" viewBox="0 0 33 33"><path d="M1.2 8 V29.8 Q1.2 31.3 2.7 31.3 H3.6 Q3.6 25.3 7.1 25.3 Q10.6 25.3 10.6 31.3 H21.8 Q21.8 25.3 25.2 25.3 Q28.6 25.3 28.6 31.3 H30 Q31.5 31.3 31.5 29.8 V9.5 Q31.5 8 30 8 H18 V3 Q18 1.5 16.5 1.5 H2.7 Q1.2 1.5 1.2 3 Z" fill="#fff" stroke="#3d5a8a" stroke-width="1.8" stroke-linejoin="round"/>
<rect x="2.3" y="2.6" width="14.8" height="5" fill="#86a6e0"/>
<path d="M4 21.2 L7.7 11.6 H10.4 L14 21.2 H11.3 L10.6 19.2 H7.4 L6.7 21.2 Z M8 17 H10 L9 14 Z" fill="#c8501a" fill-rule="evenodd"/>
<rect x="18" y="11.4" width="10" height="1.7" fill="#e0601e"/>
<g fill="#8a9ab0"><rect x="18" y="15.4" width="3.7" height="1.5"/><rect x="24.2" y="15.4" width="3.7" height="1.5"/><rect x="18" y="19.4" width="2" height="1.5"/><rect x="22.5" y="19.4" width="5.5" height="1.5"/></g></svg>
<div class="t" style="top:954.1px;font-size:21px;line-height:21px;color:#2b2b2b;left:117.5px;">Cancelled by Staff</div>
<div class="t" style="top:954.1px;font-size:21px;line-height:21px;color:#2b2b2b;right:845.0px;text-align:right;">47</div>
<div style="left:32.5px;top:1026px;width:1357.5px;height:2px;background:#d5d5d5;"></div>
<svg style="left:56px;top:987px" width="33" height="33" viewBox="0 0 33 33"><defs><linearGradient id="dsh" x1="0" y1="0" x2="1" y2="1"><stop offset="0" stop-color="#b8f0ff"/><stop offset="1" stop-color="#2898e0"/></linearGradient></defs>
<path d="M0.6 8 L8.5 2.5 V23 Z" fill="url(#dsh)" stroke="#3a9ad8" stroke-width="1"/>
<path d="M8.5 1.2 H23.5 L31.6 8.5 V30.4 H8.5 Z" fill="#f2f7fc" stroke="#2f82cc" stroke-width="1.9" stroke-linejoin="round"/>
<path d="M22.8 1.2 V9.2 H31.6" fill="#fff" stroke="#2f82cc" stroke-width="1.6"/>
<g fill="#98a4b4"><rect x="12.5" y="9.4" width="4" height="1.6"/><rect x="12.5" y="15.3" width="5.5" height="1.6"/><rect x="20.5" y="15.3" width="3.7" height="1.6"/><rect x="12.5" y="19.3" width="4" height="1.6"/><rect x="19" y="19.3" width="5.5" height="1.6"/><rect x="12.5" y="23.3" width="4" height="1.6"/></g></svg>
<div class="t" style="top:996.1px;font-size:21px;line-height:21px;color:#2b2b2b;left:117.5px;">Order Cancelled by Staff</div>
<div class="t" style="top:996.1px;font-size:21px;line-height:21px;color:#2b2b2b;right:845.0px;text-align:right;">15</div>
<div style="left:32.5px;top:1068px;width:1357.5px;height:2px;background:#d5d5d5;"></div>
<svg style="left:56px;top:1029px" width="33" height="33" viewBox="0 0 33 33"><path d="M1.2 8 V29.8 Q1.2 31.3 2.7 31.3 H3.6 Q3.6 25.3 7.1 25.3 Q10.6 25.3 10.6 31.3 H21.8 Q21.8 25.3 25.2 25.3 Q28.6 25.3 28.6 31.3 H30 Q31.5 31.3 31.5 29.8 V9.5 Q31.5 8 30 8 H18 V3 Q18 1.5 16.5 1.5 H2.7 Q1.2 1.5 1.2 3 Z" fill="#fff" stroke="#3d5a8a" stroke-width="1.8" stroke-linejoin="round"/>
<rect x="2.3" y="2.6" width="14.8" height="5" fill="#86a6e0"/>
<path d="M4 21.2 L7.7 11.6 H10.4 L14 21.2 H11.3 L10.6 19.2 H7.4 L6.7 21.2 Z M8 17 H10 L9 14 Z" fill="#c8501a" fill-rule="evenodd"/>
<rect x="18" y="11.4" width="10" height="1.7" fill="#e0601e"/>
<g fill="#8a9ab0"><rect x="18" y="15.4" width="3.7" height="1.5"/><rect x="24.2" y="15.4" width="3.7" height="1.5"/><rect x="18" y="19.4" width="2" height="1.5"/><rect x="22.5" y="19.4" width="5.5" height="1.5"/></g></svg>
<div class="t" style="top:1038.2px;font-size:21px;line-height:21px;color:#2b2b2b;left:117.5px;">Request Finished</div>
<div class="t" style="top:1038.2px;font-size:21px;line-height:21px;color:#2b2b2b;right:845.0px;text-align:right;">10</div>
<div style="left:32.5px;top:1110px;width:1357.5px;height:2px;background:#d5d5d5;"></div>
<svg style="left:56px;top:1071px" width="33" height="33" viewBox="0 0 33 33"><defs><linearGradient id="dsh" x1="0" y1="0" x2="1" y2="1"><stop offset="0" stop-color="#b8f0ff"/><stop offset="1" stop-color="#2898e0"/></linearGradient></defs>
<path d="M0.6 8 L8.5 2.5 V23 Z" fill="url(#dsh)" stroke="#3a9ad8" stroke-width="1"/>
<path d="M8.5 1.2 H23.5 L31.6 8.5 V30.4 H8.5 Z" fill="#f2f7fc" stroke="#2f82cc" stroke-width="1.9" stroke-linejoin="round"/>
<path d="M22.8 1.2 V9.2 H31.6" fill="#fff" stroke="#2f82cc" stroke-width="1.6"/>
<g fill="#98a4b4"><rect x="12.5" y="9.4" width="4" height="1.6"/><rect x="12.5" y="15.3" width="5.5" height="1.6"/><rect x="20.5" y="15.3" width="3.7" height="1.6"/><rect x="12.5" y="19.3" width="4" height="1.6"/><rect x="19" y="19.3" width="5.5" height="1.6"/><rect x="12.5" y="23.3" width="4" height="1.6"/></g></svg>
<div class="t" style="top:1080.2px;font-size:21px;line-height:21px;color:#2b2b2b;left:117.5px;">Order Finished</div>
<div class="t" style="top:1080.2px;font-size:21px;line-height:21px;color:#2b2b2b;right:845.0px;text-align:right;">3</div>
<div style="left:32.5px;top:1152px;width:1357.5px;height:2px;background:#d5d5d5;"></div>
<svg style="left:56px;top:1113px" width="33" height="33" viewBox="0 0 33 33"><path d="M1.2 8 V29.8 Q1.2 31.3 2.7 31.3 H3.6 Q3.6 25.3 7.1 25.3 Q10.6 25.3 10.6 31.3 H21.8 Q21.8 25.3 25.2 25.3 Q28.6 25.3 28.6 31.3 H30 Q31.5 31.3 31.5 29.8 V9.5 Q31.5 8 30 8 H18 V3 Q18 1.5 16.5 1.5 H2.7 Q1.2 1.5 1.2 3 Z" fill="#fff" stroke="#3d5a8a" stroke-width="1.8" stroke-linejoin="round"/>
<rect x="2.3" y="2.6" width="14.8" height="5" fill="#86a6e0"/>
<path d="M4 21.2 L7.7 11.6 H10.4 L14 21.2 H11.3 L10.6 19.2 H7.4 L6.7 21.2 Z M8 17 H10 L9 14 Z" fill="#c8501a" fill-rule="evenodd"/>
<rect x="18" y="11.4" width="10" height="1.7" fill="#e0601e"/>
<g fill="#8a9ab0"><rect x="18" y="15.4" width="3.7" height="1.5"/><rect x="24.2" y="15.4" width="3.7" height="1.5"/><rect x="18" y="19.4" width="2" height="1.5"/><rect x="22.5" y="19.4" width="5.5" height="1.5"/></g></svg>
<div class="t" style="top:1122.2px;font-size:21px;line-height:21px;color:#2b2b2b;left:117.5px;">Item On Hold for Staff</div>
<div class="t" style="top:1122.2px;font-size:21px;line-height:21px;color:#2b2b2b;right:845.0px;text-align:right;">1</div>
<div style="left:32.5px;top:1389px;width:1357.5px;height:2px;background:#a9a9a9;"></div>
<div style="left:32.5px;top:1391px;width:1357.5px;height:60px;background:#f0f0f0;"></div>
<div style="left:1270px;top:1398px;width:112px;height:44px;border:2px solid #acacac;background:#fff"></div>
<div class="t" style="top:1411.7px;font-size:21px;line-height:21px;color:#2b2b2b;right:853.0px;text-align:right;">168</div>
<div style="left:1422px;top:386px;width:2px;height:428px;background:#bcbcbc;"></div>
<div style="left:2218px;top:386px;width:2px;height:428px;background:#bcbcbc;"></div>
<div style="left:1422px;top:812px;width:798px;height:2px;background:#bcbcbc;"></div>
<div style="left:1422px;top:386px;width:15px;height:2px;background:#bcbcbc;"></div>
<div style="left:1606px;top:386px;width:614px;height:2px;background:#bcbcbc;"></div>
<div class="t" style="top:374.1px;font-size:21px;line-height:21px;color:#333;left:1445.0px;">Signed In Users</div>
<div style="left:1428px;top:448px;width:785.5px;height:360.5px;background:#fff;"></div>
<div style="left:1428px;top:446px;width:785.5px;height:2px;background:#bcbcbc;"></div>
<div style="left:1672px;top:408px;width:2px;height:39px;background:#bcbcbc;"></div>
<div style="left:2040px;top:408px;width:2px;height:39px;background:#bcbcbc;"></div>
<div class="t" style="top:416.1px;font-size:21px;line-height:21px;color:#333;left:1681.0px;">Name</div>
<div class="t" style="top:416.1px;font-size:21px;line-height:21px;color:#333;left:2049.5px;">Seat</div>
<div style="left:1422px;top:844px;width:2px;height:182px;background:#bcbcbc;"></div>
<div style="left:2218px;top:844px;width:2px;height:182px;background:#bcbcbc;"></div>
<div style="left:1422px;top:1024px;width:798px;height:2px;background:#bcbcbc;"></div>
<div style="left:1422px;top:844px;width:15px;height:2px;background:#bcbcbc;"></div>
<div style="left:1763px;top:844px;width:457px;height:2px;background:#bcbcbc;"></div>
<svg style="left:1446px;top:835px" width="22" height="16" viewBox="0 0 22 16"><path d="M2 13 L11 4 L20 13" fill="none" stroke="#555" stroke-width="3.2"/></svg>
<div class="t" style="top:832.1px;font-size:21px;line-height:21px;color:#333;left:1483.5px;">Users Waiting to Be Cleared</div>
<div style="left:1442px;top:880px;width:758px;height:45px;background:#e4f0fa;"></div>
<div style="left:1442px;top:925px;width:758px;height:80.5px;background:#fff;"></div>
<svg style="left:1461px;top:895px" width="10" height="18" viewBox="0 0 10 18"><path d="M1 1 L9 9 L1 17 Z" fill="#555"/></svg>
<div class="t" style="top:893.3px;font-size:22px;line-height:22px;color:#111;font-weight:700;letter-spacing:0.95px;left:1488.0px;">Waiting to be Cleared (4)</div>
<div style="left:1422px;top:1056px;width:2px;height:180px;background:#bcbcbc;"></div>
<div style="left:2218px;top:1056px;width:2px;height:180px;background:#bcbcbc;"></div>
<div style="left:1422px;top:1234px;width:798px;height:2px;background:#bcbcbc;"></div>
<div style="left:1422px;top:1056px;width:15px;height:2px;background:#bcbcbc;"></div>
<div style="left:1733px;top:1056px;width:487px;height:2px;background:#bcbcbc;"></div>
<svg style="left:1446px;top:1047px" width="22" height="16" viewBox="0 0 22 16"><path d="M2 13 L11 4 L20 13" fill="none" stroke="#555" stroke-width="3.2"/></svg>
<div class="t" style="top:1043.2px;font-size:21px;line-height:21px;color:#333;left:1484.0px;">Appointments to Confirm</div>
<div style="left:1442px;top:1091px;width:758px;height:124.5px;background:#fff;"></div>
<div style="left:1422px;top:1266px;width:2px;height:210px;background:#bcbcbc;"></div>
<div style="left:2218px;top:1266px;width:2px;height:210px;background:#bcbcbc;"></div>
<div style="left:1422px;top:1474px;width:798px;height:2px;background:#bcbcbc;"></div>
<div style="left:1422px;top:1266px;width:15px;height:2px;background:#bcbcbc;"></div>
<div style="left:1564px;top:1266px;width:656px;height:2px;background:#bcbcbc;"></div>
<svg style="left:1446px;top:1257px" width="22" height="16" viewBox="0 0 22 16"><path d="M2 13 L11 4 L20 13" fill="none" stroke="#555" stroke-width="3.2"/></svg>
<div class="t" style="top:1253.2px;font-size:21px;line-height:21px;color:#333;left:1484.0px;">System</div>
<div style="left:1442px;top:1302px;width:758px;height:35px;background:#e4f0fa;"></div>
<div style="left:1442px;top:1337px;width:758px;height:2px;background:#d5d5d5;"></div>
<div style="left:1442px;top:1339px;width:758px;height:117px;background:#fff;"></div>
<div class="t" style="top:1309.2px;font-size:21px;line-height:21px;color:#2b2b2b;left:1449.5px;">Email Messages Failed</div>
<div class="t" style="top:1309.2px;font-size:21px;line-height:21px;color:#2b2b2b;right:35.0px;text-align:right;">21</div>
<div style="left:0px;top:1485.5px;width:2228px;height:2.0px;background:#bcbcbc;"></div>
<div class="t" style="top:1497.7px;font-size:21px;line-height:21px;color:#2b2b2b;left:10.0px;">admin</div>
<svg style="left:2207px;top:1508px" width="20" height="18" viewBox="0 0 20 18"><rect x="16" y="2" width="3" height="3" fill="#555"/><rect x="11" y="7" width="3" height="3" fill="#555"/><rect x="16" y="7" width="3" height="3" fill="#555"/><rect x="6" y="12" width="3" height="3" fill="#555"/><rect x="11" y="12" width="3" height="3" fill="#555"/><rect x="16" y="12" width="3" height="3" fill="#555"/></svg>
<div style="left:1059px;top:297px;width:317px;height:185px;border:7px solid #f04405;background:#fff"></div>
<div class="t" style="top:317.3px;font-size:22px;line-height:22px;color:#222;font-weight:700;letter-spacing:0.75px;left:1078.0px;">Name Search Criteria</div>
<div class="t" style="top:355.7px;font-size:21.5px;line-height:21.5px;color:#222;left:1089.0px;">Searches the following fields:</div>
<div class="t" style="top:408.1px;font-size:21px;line-height:21px;color:#2b2b2b;left:1089.0px;">FirstName</div>
<div class="t" style="top:434.1px;font-size:21px;line-height:21px;color:#2b2b2b;left:1089.0px;">PreferredName</div>
<div class="t" style="top:460.1px;font-size:21px;line-height:21px;color:#2b2b2b;left:1089.0px;">LastName</div>
<svg style="left:960px;top:180px" width="120" height="130" viewBox="0 0 120 130"><defs><filter id="sh" x="-30%" y="-30%" width="160%" height="160%"><feGaussianBlur stdDeviation="3"/></filter></defs>
<g transform="translate(-3,4)" filter="url(#sh)" opacity=".75">
<line x1="30" y1="30" x2="77" y2="87" stroke="#333" stroke-width="10" stroke-linecap="round"/>
<path d="M98 112 L67.4 98.4 L90.6 79.2 Z" fill="#333"/></g>
<line x1="30" y1="30" x2="80" y2="90" stroke="#f04405" stroke-width="10" stroke-linecap="round"/>
<path d="M98 111.8 L67.4 98.4 L90.6 79.2 Z" fill="#f04405"/></svg>
<svg style="left:1230px;top:190px" width="40" height="50" viewBox="0 0 40 50"><defs><filter id="csh"><feGaussianBlur stdDeviation="2"/></filter></defs>
<path transform="translate(2,3)" d="M7 4.5 V38.5 L15.5 31 L21 42.4 L26.2 41 L21.5 29.6 L30.5 30 Z" fill="#000" opacity=".3" filter="url(#csh)"/>
<path d="M7 4.5 V38.5 L15.5 31 L21 42.4 L26.2 41 L21.5 29.6 L30.5 29.6 V27 Z" fill="#fff" stroke="#1a1a22" stroke-width="1.7" stroke-linejoin="miter"/></svg>
</body></html>
